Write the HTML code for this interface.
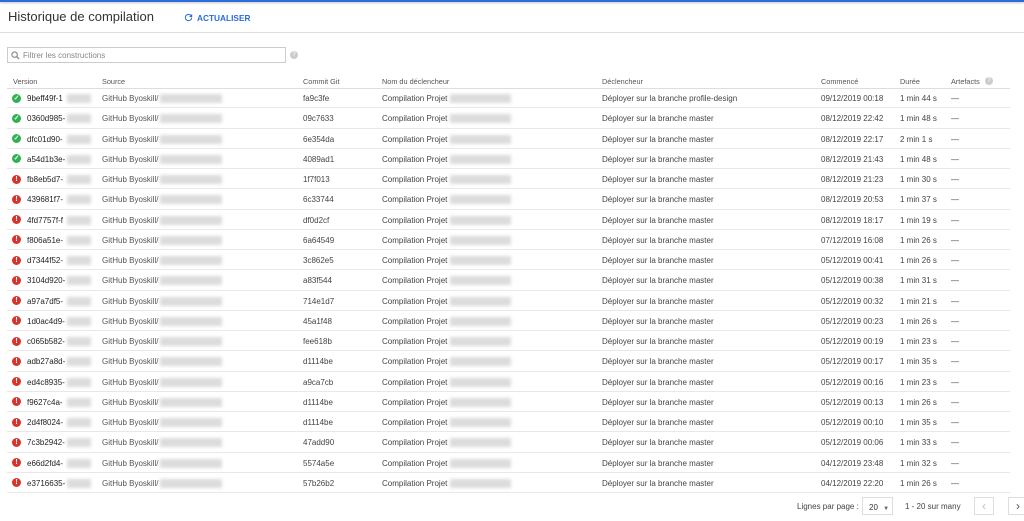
<!DOCTYPE html>
<html><head><meta charset="utf-8"><style>
*{margin:0;padding:0;box-sizing:border-box}
body{width:1024px;height:521px;overflow:hidden;background:#fff;font-family:"Liberation Sans",Arial,sans-serif;color:#333;position:relative}
.abs{position:absolute;white-space:nowrap}
.topbar{position:absolute;left:0;top:0;width:1024px;height:2px;background:#2a6dd8;box-shadow:0 1px 2px rgba(0,0,0,.25)}
.row{position:absolute;left:7px;width:1003px;border-bottom:1px solid #e8e8e8;height:20.25px;font-size:8px;color:#444}
.row span{position:absolute;top:6px;white-space:nowrap}
.blur{position:absolute;background:#dcdcdc;filter:blur(1.5px);height:9px;top:6px}
.ic{position:absolute;left:5px;top:5.5px;width:9px;height:9px;border-radius:50%;color:#fff;font-size:7px;font-weight:bold;text-align:center;line-height:9px}
.ok{background:#2eb24f}
.er{background:#d9332b}
.hd{font-size:7.3px;color:#555;top:77px}
</style></head><body>
<div class="topbar"></div>
<div class="abs" style="left:8px;top:9px;font-size:13px;color:#333">Historique de compilation</div>
<svg class="abs" style="left:183px;top:12px" width="11" height="11" viewBox="0 0 24 24"><path d="M17.65 6.35A7.958 7.958 0 0012 4a8 8 0 108 8h-2.2A5.8 5.8 0 1112 6.2c1.6 0 3 .66 4.05 1.7L13 11h7V4l-2.35 2.35z" fill="#2a6dd8"/></svg>
<div class="abs" style="left:197px;top:13px;font-size:8.3px;font-weight:bold;color:#2a6dd8">ACTUALISER</div>
<div class="abs" style="left:0;top:32px;width:1024px;height:1px;background:#ddd"></div>
<div class="abs" style="left:7px;top:47px;width:279px;height:16px;border:1px solid #ccc"></div>
<svg class="abs" style="left:11px;top:51px" width="9" height="9" viewBox="0 0 10 10"><circle cx="4" cy="4" r="3" fill="none" stroke="#888" stroke-width="1.2"/><path d="M6.2 6.2L9 9" stroke="#888" stroke-width="1.4"/></svg>
<div class="abs" style="left:23px;top:51px;font-size:8px;color:#888">Filtrer les constructions</div>
<div class="abs" style="left:290px;top:51px;width:8px;height:8px;border-radius:50%;background:#ccc;color:#fff;font-size:6px;text-align:center;line-height:8px">?</div>
<div class="abs hd" style="left:13px">Version</div>
<div class="abs hd" style="left:102px">Source</div>
<div class="abs hd" style="left:303px">Commit Git</div>
<div class="abs hd" style="left:382px">Nom du déclencheur</div>
<div class="abs hd" style="left:602px">Déclencheur</div>
<div class="abs hd" style="left:821px">Commencé</div>
<div class="abs hd" style="left:900px">Durée</div>
<div class="abs hd" style="left:951px">Artefacts</div>
<div class="abs" style="left:985px;top:77px;width:8px;height:8px;border-radius:50%;background:#ccc;color:#fff;font-size:6px;text-align:center;line-height:8px">?</div>
<div class="abs" style="left:7px;top:88px;width:1003px;height:1px;background:#ddd"></div>
<div id="rows"></div>
<div class="abs" style="left:797px;top:502px;font-size:8px;color:#444">Lignes par page :</div>
<div class="abs" style="left:862px;top:497px;width:31px;height:18px;border:1px solid #ddd;font-size:8px;color:#333;padding:5px 0 0 6px">20 <span style="font-size:6px;color:#666;margin-left:3px">▼</span></div>
<div class="abs" style="left:905px;top:502px;font-size:8px;color:#444">1 - 20 sur many</div>
<div class="abs" style="left:974px;top:497px;width:20px;height:18px;border:1px solid #ddd;font-size:12px;color:#bbb;text-align:center;line-height:16px">‹</div>
<div class="abs" style="left:1008px;top:497px;width:20px;height:18px;border:1px solid #ddd;font-size:12px;color:#555;text-align:center;line-height:16px">›</div>
<script>
var d=[["9beff49f-1","fa9c3fe","profile-design","09/12/2019 00:18","1 min 44 s",1],
["0360d985-","09c7633","master","08/12/2019 22:42","1 min 48 s",1],
["dfc01d90-","6e354da","master","08/12/2019 22:17","2 min 1 s",1],
["a54d1b3e-","4089ad1","master","08/12/2019 21:43","1 min 48 s",1],
["fb8eb5d7-","1f7f013","master","08/12/2019 21:23","1 min 30 s",0],
["439681f7-","6c33744","master","08/12/2019 20:53","1 min 37 s",0],
["4fd7757f-f","df0d2cf","master","08/12/2019 18:17","1 min 19 s",0],
["f806a51e-","6a64549","master","07/12/2019 16:08","1 min 26 s",0],
["d7344f52-","3c862e5","master","05/12/2019 00:41","1 min 26 s",0],
["3104d920-","a83f544","master","05/12/2019 00:38","1 min 31 s",0],
["a97a7df5-","714e1d7","master","05/12/2019 00:32","1 min 21 s",0],
["1d0ac4d9-","45a1f48","master","05/12/2019 00:23","1 min 26 s",0],
["c065b582-","fee618b","master","05/12/2019 00:19","1 min 23 s",0],
["adb27a8d-","d1114be","master","05/12/2019 00:17","1 min 35 s",0],
["ed4c8935-","a9ca7cb","master","05/12/2019 00:16","1 min 23 s",0],
["f9627c4a-","d1114be","master","05/12/2019 00:13","1 min 26 s",0],
["2d4f8024-","d1114be","master","05/12/2019 00:10","1 min 35 s",0],
["7c3b2942-","47add90","master","05/12/2019 00:06","1 min 33 s",0],
["e66d2fd4-","5574a5e","master","04/12/2019 23:48","1 min 32 s",0],
["e3716635-","57b26b2","master","04/12/2019 22:20","1 min 26 s",0]];
var h="";
d.forEach(function(r,i){
h+='<div class="row" style="top:'+(88+i*20.25)+'px">'+
(r[5]?'<div class="ic ok">✓</div>':'<div class="ic er">!</div>')+
'<span style="left:20px;color:#222">'+r[0]+'</span><div class="blur" style="left:60px;width:24px"></div>'+
'<span style="left:95px;color:#555">GitHub Byoskill/</span><div class="blur" style="left:153px;width:62px"></div>'+
'<span style="left:296px">'+r[1]+'</span>'+
'<span style="left:375px">Compilation Projet</span><div class="blur" style="left:443px;width:61px"></div>'+
'<span style="left:595px">Déployer sur la branche '+r[2]+'</span>'+
'<span style="left:814px">'+r[3]+'</span><span style="left:893px">'+r[4]+'</span><span style="left:944px">—</span></div>';});
document.getElementById("rows").innerHTML=h;
</script>
</body></html>
